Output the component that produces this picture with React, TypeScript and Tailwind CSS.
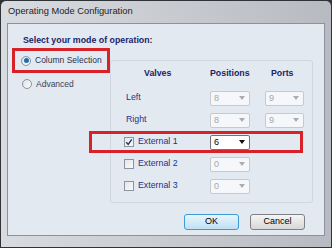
import React from 'react';

const font = { fontFamily: '"Liberation Sans", Arial, sans-serif' };

function Combo({ value, enabled = false }: { value: string; enabled?: boolean }) {
  return (
    <div
      className={`flex h-[15px] items-center justify-between rounded-[2px] border pl-[3px] pr-[4px] ${
        enabled ? 'border-[#6f747a] bg-white text-black' : 'border-[#c5cad2] bg-[#f5f7fa] text-[#a4a8ae]'
      }`}
    >
      <span className="text-[9px] leading-none">{value}</span>
      <svg width="6" height="4" viewBox="0 0 6 4">
        <path d="M0 0H6L3 4Z" fill={enabled ? '#111' : '#a9adb3'} />
      </svg>
    </div>
  );
}

function Check({ checked = false }: { checked?: boolean }) {
  return (
    <span className="flex h-[10px] w-[10px] items-center justify-center border border-[#8e949c] bg-gradient-to-br from-[#e4e7eb] to-[#f8f9fb]">
      {checked && (
        <svg width="8" height="8" viewBox="0 0 8 8">
          <path d="M1.2 4.2L3.2 6.3L6.8 1.4" stroke="#2a3560" strokeWidth="1.4" fill="none" />
        </svg>
      )}
    </span>
  );
}

function Radio({ checked = false }: { checked?: boolean }) {
  return (
    <span className="flex h-[10px] w-[10px] shrink-0 items-center justify-center rounded-full border border-[#8d939b] bg-gradient-to-br from-[#dfe3e8] to-[#fbfcfd]">
      {checked && <span className="h-[5px] w-[5px] rounded-full bg-[#1f6fb0]" />}
    </span>
  );
}

const rows = [
  { name: 'Left', pos: '8', port: '9' },
  { name: 'Right', pos: '8', port: '9' },
  { name: 'External 1', pos: '6', check: true, checked: true, active: true },
  { name: 'External 2', pos: '0', check: true },
  { name: 'External 3', pos: '0', check: true },
];

export default function App() {
  return (
    <div className="h-[248px] w-[332px] overflow-hidden bg-[#2f3338] p-[1px]" style={font}>
      <div className="flex h-full w-full flex-col rounded-t-[5px] bg-gradient-to-r from-[#d8dce1] via-[#c8ccd1] to-[#b7bbc1] px-[6px] pb-[11px]">
        <div className="flex h-[22px] items-center pl-[1px] text-[9.3px] text-[#1d1f22]">Operating Mode Configuration</div>
        <div className="flex flex-1 flex-col border border-[#8c9299] bg-[#e3e9f1] px-[4px]">
          <div className="pl-[11px] pt-[12px] text-[8.8px] font-bold leading-[9px] text-[#1b2468]">Select your mode of operation:</div>
          <div className="flex">
            <div className="w-[98px] shrink-0 pt-[3px]">
              <div className="flex h-[25px] items-center gap-[4px] whitespace-nowrap border-[3px] border-[#d8222a] pl-[6px] text-[8.5px] text-[#27314f]">
                <Radio checked />
                <span>Column Selection</span>
              </div>
              <div className="mt-[5px] flex items-center gap-[4px] pl-[10px] text-[8.5px] text-[#3b4356]">
                <Radio />
                <span>Advanced</span>
              </div>
            </div>
            <div className="mt-[15px] h-[143px] w-[203px] rounded-[3px] border border-[#cfd6e0]">
              <div className="flex h-[26px] items-center pb-[1px] text-[8.8px] font-bold text-[#1b2468]">
                <span className="w-[98px] pl-[33px]">Valves</span>
                <span className="w-[55px] pl-[1px]">Positions</span>
                <span className="pl-[7px]">Ports</span>
              </div>
              <div className="flex flex-col">
                {rows.map((r) => (
                  <div
                    key={r.name}
                    className={`flex h-[22px] items-center ${
                      r.active ? '-ml-[22px] mr-[9px] border-[3px] border-[#d8222a] pl-[22px]' : 'border-[3px] border-transparent'
                    }`}
                  >
                    <div
                      className={`flex w-[95px] items-center gap-[4px] whitespace-nowrap text-[8.8px] text-[#24328a] ${
                        r.check ? 'pl-[10px]' : 'pl-[12px]'
                      }`}
                    >
                      {r.check && <Check checked={r.checked} />}
                      <span>{r.name}</span>
                    </div>
                    <div className="ml-[1px] w-[40px]">
                      <Combo value={r.pos} enabled={r.active} />
                    </div>
                    {r.port && (
                      <div className="ml-[15px] w-[39px]">
                        <Combo value={r.port} />
                      </div>
                    )}
                  </div>
                ))}
              </div>
            </div>
          </div>
          <div className="mt-[11px] flex justify-end gap-[11px] pr-[15px]">
            <button className="h-[16px] w-[55px] rounded-[3px] border border-[#3c9bd6] bg-gradient-to-b from-[#e9f5fc] to-[#bfe0f4] text-[9px] text-black">
              OK
            </button>
            <button className="h-[16px] w-[55px] rounded-[3px] border border-[#7d8187] bg-gradient-to-b from-[#f5f5f5] to-[#d7d7d7] text-[9px] text-black">
              Cancel
            </button>
          </div>
        </div>
      </div>
    </div>
  );
}
